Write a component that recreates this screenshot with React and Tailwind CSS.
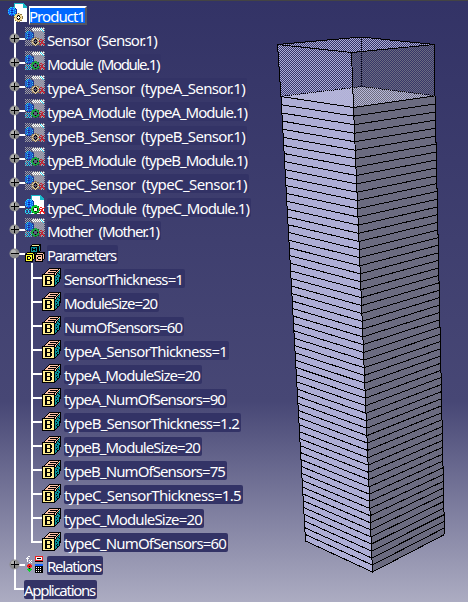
import { useLayoutEffect, useRef } from "react";

const PALETTE = {
  w: "#ffffff", c: "#28d8f0", t: "#0a9098", b: "#1263ff", n: "#10309c",
  y: "#ffee90", Y: "#ffff30", k: "#000000", g: "#a0a0a8", r: "#f02020",
  G: "#10d030", D: "#067018", p: "#ffc4a8", d: "#907840", s: "#f5dc98",
};

// Small bitmap: one character per pixel, "." is transparent.
function Pix({ rows, x = 0, y = 0 }) {
  return rows.flatMap((row, j) =>
    [...row].map((ch, i) =>
      ch === "." ? null : (
        <rect key={`${i}-${j}`} x={x + i} y={y + j} width="1" height="1" fill={PALETTE[ch]} />
      )
    )
  );
}

// Every second pixel of a box, as one path.
function checker(x0, y0, w, h, parity) {
  let d = "";
  for (let y = y0; y < y0 + h; y++)
    for (let x = x0; x < x0 + w; x++) if ((x + y) % 2 === parity) d += `M${x} ${y}h1v1h-1z`;
  return d;
}
const GHOST_BACK = checker(0, 0, 20, 19, 0);
const GHOST_PAGE = checker(7, 1, 12, 17, 1);
const GHOST_INK = checker(0, 4, 20, 15, 1);

const BLUE_GEAR = [
  "..ccbc...",
  ".cbbbbcn.",
  "bbcbbcbbn",
  "cbbnnbbcn",
  "bbcbbcbbn",
  "cbbnnbbcn",
  "bbcbbcbbn",
  ".cbbbbcn.",
  "..nbnn...",
];
const YELLOW_GEAR = [
  "...sds...",
  ".dssssdd.",
  ".ssdkdss.",
  "sssk.kssd",
  "dsd...dsd",
  "sssk.kssd",
  ".ssdkdss.",
  ".dssssdd.",
  "...dsd...",
];
const GREEN_GEAR = [
  "...GGG...",
  ".GGGGGGD.",
  ".GGDkDGG.",
  "GGD...DGD",
  "GGk...kGD",
  "GGD...DGD",
  ".GGDkDGG.",
  ".DGGGGDD.",
  "...GDD...",
];
const RED_BITS = [
  "..rr..r",
  ".r..rr.",
  ".rrrr..",
  "...rr..",
  "..rrrr.",
  ".rr..rr",
  "..r...r",
];
const CYAN_BITS = [".cc.cc.", "c..c..c", "cb.cb.c", "c..c..c", ".cc.cc."];
const BLOCK_B = [
  ".......kkkkkkkkkkkk",
  "......kpppppppppkpk",
  ".....kppkkkkkkkkptk",
  "....kpppppppppkpktk",
  "...kppkkkkkkkkpkttk",
  "..kpppppppppkpktktk",
  "kkkkkkkkkkkkkpkttkk",
  "kyyyyyyyyyyykkttttk",
  "kyykkkkkkyyykttkttk",
  "kyykkyyykkyykttttkk",
  "kyykkyyykkyyktkttkk",
  "kyykkyyykkyykttttk.",
  "kyykkkkkkyyykttktk.",
  "kyykkyyykkyyktkttk.",
  "kyykkyyykkyykttkk..",
  "kyykkyyykkyykttk...",
  "kyykkkkkkyyyktk....",
  "kyyyyyyyyyyykk.....",
  "kkkkkkkkkkkkk......",
];
const BLOCK_H = [
  "..kkkkkkkkk",
  ".kyyyyyyykk",
  "kkkkkkkkktk",
  "kttttttkktk",
  "ktkttktkktk",
  "ktkkkktkktk",
  "ktkttktkktk",
  "kttttttkkk.",
  "kkkkkkkkk..",
];
const BLOCK_D = [
  "..kkkkkkkk",
  ".kYYYYYYkk",
  "kkkkkkkkYk",
  "kYYYYYYkYk",
  "kYkkkYYkYk",
  "kYkYYkYkYk",
  "kYkYYkYkYk",
  "kYkkkYYkk.",
  "kYYYYYYk..",
  "kkkkkkkk..",
];
const BLOCK_C = [
  "..kkkkkkkk",
  ".kppppppkk",
  "kkkkkkkkpk",
  "kppppppkpk",
  "kppkkkpkpk",
  "kpkppppkpk",
  "kpkppppkpk",
  "kppkkkpkk.",
  "kppppppk..",
  "kkkkkkkk..",
];

function Page() {
  return (
    <>
      <path d="M6 0h9l4 4v15H6z" fill="#fff" />
      <path d="M6 15V0h9v1H7v14zM15 0h1v1h1v1h1v1h1v2h-4z" fill="#18b8c8" />
    </>
  );
}

function Icon({ kind }) {
  const cls = "block shrink-0 overflow-visible";
  if (kind === "block")
    return (
      <svg width="19" height="19" className={`${cls} mt-[2px]`} shapeRendering="crispEdges">
        <Pix rows={BLOCK_B} />
      </svg>
    );
  if (kind === "params")
    return (
      <svg width="20" height="20" className={`${cls} mt-[2px]`} shapeRendering="crispEdges">
        <Pix rows={BLOCK_D} y={8} />
        <Pix rows={BLOCK_C} x={10} y={8} />
        <Pix rows={BLOCK_H} x={5} />
      </svg>
    );
  if (kind === "relations")
    return (
      <svg width="20" height="18" className={`${cls} mt-[3px]`} shapeRendering="crispEdges">
        <Pix x={1} rows={["..ww...", ".w.....", "www....", ".w.....", ".w.w.w.", ".w..w..", "...w.w."]} />
        <Pix
          x={10}
          y={0}
          rows={["rrrrrrrr", "rwwwwwwr", "rwkkkkwr", "rwwwwwwr", "rrrrrrrr", "kkkkkkkk"]}
        />
        <Pix x={2} y={8} rows={[".rrr.", "rrrrr", "rrkrr", ".rrr.", ".GkG.", "GGGGG", ".GGG.", "..G.."]} />
        <Pix
          x={10}
          y={8}
          rows={["bbbbbbbb", "bbbbbbbb", "kkkkkkkk", "kwkwkwkk", "kkkkkkkk", "kwkwkwkk", "kkkkkkkk", "kwkwkwkk", "kkkkkkkk"]}
        />
      </svg>
    );
  if (kind === "product")
    return (
      <svg width="20" height="20" className={cls} shapeRendering="crispEdges">
        <Page />
        <Pix rows={BLUE_GEAR} y={4} />
        <Pix rows={YELLOW_GEAR} x={6} y={10} />
      </svg>
    );
  const ghost = kind !== "module-loaded";
  return (
    <svg width="20" height="20" className={cls} shapeRendering="crispEdges">
      {ghost ? (
        <>
          <path d={GHOST_BACK} fill="#a0a0a4" />
          <path d={GHOST_PAGE} fill="#ffffff" />
          <path d="M15 1h1v1h1v1h1v1h1v1h-1v-1h-1v-1h-1v-1h-1z" fill="#28d8f0" />
        </>
      ) : (
        <Page />
      )}
      {ghost && <path d="M1 4h7v1h1v7h-1v1h7v6h-8v-6h-6z" fill="#333366" opacity="0.6" />}
      <Pix rows={BLUE_GEAR} y={4} />
      {kind === "sensor" ? (
        <Pix rows={YELLOW_GEAR} x={6} y={10} />
      ) : (
        <>
          <Pix rows={CYAN_BITS} y={14} />
          <Pix rows={GREEN_GEAR} x={6} y={10} />
        </>
      )}
      <Pix rows={RED_BITS} x={13} y={12} />
      {ghost && <path d={GHOST_INK} fill="#404070" opacity="0.6" />}
    </svg>
  );
}

// Tree connector with an optional expander knob.
function Branch({ knob, h, first, last, stub }) {
  return (
    <svg width="25" height={h} className="block shrink-0" shapeRendering="crispEdges">
      <rect x="14" y={first ? 18 : 0} width="2" height={first ? h - 18 : last ? 13 : h} fill="#fff" />
      {stub && <rect x="16" y="11" width="9" height="2" fill="#fff" />}
      {knob && (
        <g>
          <circle cx="14.5" cy="11.5" r="5" fill="#8c8c8c" shapeRendering="auto" />
          <circle cx="13.5" cy="10" r="2.5" fill="#b4b4b4" shapeRendering="auto" />
          <rect x="11" y="11" width="8" height="1" fill="#000" />
          {knob === "+" && <rect x="14" y="8" width="1" height="7" fill="#000" />}
        </g>
      )}
    </svg>
  );
}

function Label({ text, width, root }) {
  const ref = useRef(null);
  useLayoutEffect(() => {
    const el = ref.current;
    el.style.letterSpacing = "0px";
    const natural = el.getBoundingClientRect().width;
    el.style.letterSpacing = `${(width - (root ? 2 : 2) - natural) / text.length}px`;
  }, [text, width, root]);
  return (
    <div
      className={
        root
          ? "mt-[3px] h-[19px] shrink-0 border-t-2 border-l border-r-2 border-b-2 border-t-white border-l-white border-r-[#555560] border-b-[#555560] bg-[#0068ff] leading-[16px]"
          : "mt-[3px] h-[19px] shrink-0 rounded-[2px] bg-[#333366] leading-[20px]"
      }
      style={{ width }}
    >
      <span
        ref={ref}
        className={`inline-block whitespace-pre text-[15px] [word-spacing:3px] text-white ${root ? "-ml-px" : ""}`}
      >
        {text}
      </span>
    </div>
  );
}

const ROWS = [
  ["product", "Product1", 58],
  ["sensor", "Sensor (Sensor.1)", 112],
  ["module", "Module (Module.1)", 114],
  ["sensor", "typeA_Sensor (typeA_Sensor.1)", 200],
  ["module", "typeA_Module (typeA_Module.1)", 202],
  ["sensor", "typeB_Sensor (typeB_Sensor.1)", 200],
  ["module", "typeB_Module (typeB_Module.1)", 202],
  ["sensor", "typeC_Sensor (typeC_Sensor.1)", 202],
  ["module-loaded", "typeC_Module (typeC_Module.1)", 204],
  ["module", "Mother (Mother.1)", 114],
  ["params", "Parameters", 71],
  ["block", "SensorThickness=1", 121],
  ["block", "ModuleSize=20", 95],
  ["block", "NumOfSensors=60", 120],
  ["block", "typeA_SensorThickness=1", 165],
  ["block", "typeA_ModuleSize=20", 138],
  ["block", "typeA_NumOfSensors=90", 163],
  ["block", "typeB_SensorThickness=1.2", 177],
  ["block", "typeB_ModuleSize=20", 138],
  ["block", "typeB_NumOfSensors=75", 163],
  ["block", "typeC_SensorThickness=1.5", 179],
  ["block", "typeC_ModuleSize=20", 140],
  ["block", "typeC_NumOfSensors=60", 164],
  ["relations", "Relations", 56],
  ["apps", "Applications", 73],
];

function Row({ i, kind, text, width }) {
  const short = i === 8 || i === 22;
  const h = short ? 23 : 24;
  const rowClass = `flex items-start ${short ? "h-[23px]" : "h-6"}`;
  if (kind === "product")
    return (
      <div className={rowClass}>
        <div className="relative h-6 w-[29px] shrink-0">
          <Branch first h={24} />
          <div className="absolute top-0 left-2"><Icon kind="product" /></div>
        </div>
        <Label text={text} width={width} root />
      </div>
    );
  if (kind === "apps")
    return (
      <div className={rowClass}>
        <div className="-mr-px"><Branch last stub h={24} /></div>
        <Label text={text} width={width} />
      </div>
    );
  if (kind === "block")
    return (
      <div className={rowClass}>
        <Branch h={h} />
        <svg width="17" height={h} className="block shrink-0 overflow-visible" shapeRendering="crispEdges">
          <rect x="6" y={i === 11 ? -3 : 0} width="2" height={i === 22 ? 13 : 27} fill="#fff" />
          <rect x="8" y="11" width="9" height="2" fill="#fff" />
        </svg>
        <Icon kind="block" />
        <div className="w-[3px] shrink-0" />
        <Label text={text} width={width} />
      </div>
    );
  return (
    <div className={rowClass}>
      <Branch knob={kind === "params" ? "-" : "+"} stub h={h} />
      <div className="w-[22px] shrink-0">
        <Icon kind={kind} />
      </div>
      <Label text={text} width={width} />
    </div>
  );
}

const LAYERS = 60;
// Foreshortened position along an edge.
const depth = (t) => (t * 1.115) / (1 + 0.115 * t);
const mix = (a, b, t) => [a[0] + (b[0] - a[0]) * t, a[1] + (b[1] - a[1]) * t];

function Tower() {
  const lines = Array.from({ length: LAYERS + 1 }, (_, i) => {
    const t = depth(i / LAYERS);
    const l = mix([281, 96.5], [305.5, 541], t);
    const m = mix([353.5, 107.5], [372.5, 572], t);
    const r = mix([435, 95.8], [444.5, 534.5], t);
    return `M${l}L${m}L${r}`;
  }).join("");
  return (
    <svg width="198" height="560" viewBox="270 30 198 560" className="block" shapeRendering="crispEdges">
      <defs>
        <pattern id="light" width="2" height="2" patternUnits="userSpaceOnUse">
          <rect width="1" height="1" fill="#aeaed8" />
          <rect x="1" y="1" width="1" height="1" fill="#aeaed8" />
        </pattern>
        <pattern id="dark" width="2" height="2" patternUnits="userSpaceOnUse">
          <rect width="1" height="1" fill="#6b6b80" />
          <rect x="1" y="1" width="1" height="1" fill="#6b6b80" />
        </pattern>
      </defs>
      <path d="M281 96.5L362 86.5L435 95.8L353.5 107.5z" fill="#b8b8d8" />
      <path d="M277.5 44.5L361 37L434.5 44.5L351.5 52.5z" fill="url(#light)" />
      <path d="M277.5 44.5L351.5 52.5L353.5 107.5L281 96.5z" fill="url(#light)" />
      <path d="M434.5 44.5L351.5 52.5L353.5 107.5L435 95.8z" fill="url(#dark)" />
      <path d="M281 96.5L353.5 107.5L372.5 572L305.5 541z" fill="#aeaed6" />
      <path d="M353.5 107.5L435 95.8L444.5 534.5L372.5 572z" fill="#6b6b80" />
      <g fill="none" stroke="#000" strokeWidth="1">
        <path d={lines} />
        <path d="M277.5 44.5L361 37L434.5 44.5L351.5 52.5zM277.5 44.5L281 96.5L305.5 541M351.5 52.5L353.5 107.5L372.5 572M434.5 44.5L435 95.8L444.5 534.5" />
        <path d="M361 37L362 86.5M281 96.5L362 86.5L435 95.8" strokeDasharray="1 1" />
      </g>
    </svg>
  );
}

export default function App() {
  return (
    <div className="flex h-[602px] w-[468px] overflow-hidden border-t border-[#444444] bg-[linear-gradient(to_bottom,#333366_0px,#474775_400px,#acacc2_601px)] font-['Noto_Sans','Open_Sans',sans-serif]">
      <div className="w-[270px] shrink-0 pt-[2px]">
        {ROWS.map(([kind, text, width], i) => (
          <Row key={text} i={i} kind={kind} text={text} width={width} />
        ))}
      </div>
      <div className="pt-[29px]">
        <Tower />
      </div>
    </div>
  );
}
